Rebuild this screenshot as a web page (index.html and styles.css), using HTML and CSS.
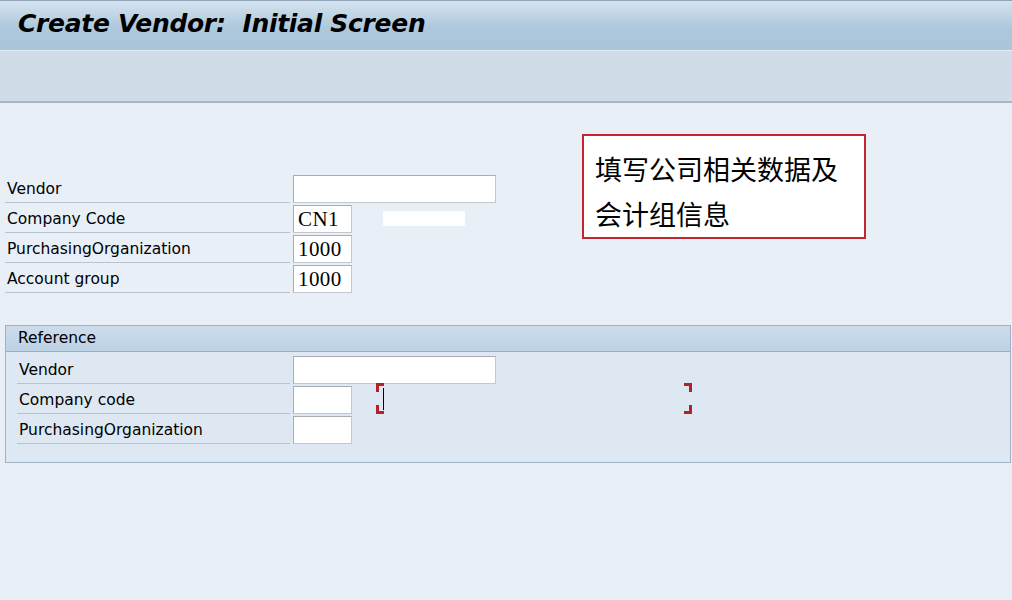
FILE: index.html
```html
<!DOCTYPE html>
<html>
  <head>
    <title>Create Vendor: Initial Screen</title>
    <link rel="stylesheet" href="styles.css">
  </head>
  <body>
    <div class="title-bar">
      <h1>Create Vendor:&nbsp; Initial Screen</h1>
    </div>
    <div class="toolbar"></div>

    <div class="screen">
      <div class="field-block">
        <div class="row">
          <label>Vendor</label>
          <div class="input wide"></div>
        </div>
        <div class="row">
          <label>Company Code</label>
          <div class="input short">CN1</div>
          <div class="desc"></div>
        </div>
        <div class="row">
          <label>PurchasingOrganization</label>
          <div class="input short">1000</div>
        </div>
        <div class="row">
          <label>Account group</label>
          <div class="input short">1000</div>
        </div>
      </div>

      <div class="group">
        <div class="group-title">Reference</div>
        <div class="group-body">
          <div class="row">
            <label>Vendor</label>
            <div class="input wide"></div>
          </div>
          <div class="row">
            <label>Company code</label>
            <div class="input short"></div>
            <div class="focus-frame">
              <span class="corner tl"></span>
              <span class="corner tr"></span>
              <span class="corner bl"></span>
              <span class="corner br"></span>
              <span class="caret"></span>
            </div>
          </div>
          <div class="row">
            <label>PurchasingOrganization</label>
            <div class="input short"></div>
          </div>
        </div>
      </div>

      <div class="callout">填写公司相关数据及<br>会计组信息</div>
    </div>
  </body>
</html>
```

FILE: styles.css
```css
html, body {
  margin: 0;
  padding: 0;
}

body {
  width: 1012px;
  height: 600px;
  overflow: hidden;
  background: #e9eff7;
  font-family: "DejaVu Sans", Tahoma, sans-serif;
  color: #000;
}

.title-bar {
  height: 50px;
  border-top: 1px solid #8fa4b8;
  border-bottom: 1px solid #b4c4d2;
  background: linear-gradient(#d6e3ef, #aec8dc 55%, #aac5da);
  box-sizing: border-box;
  padding-left: 18px;
}

.title-bar h1 {
  margin: 0;
  font-family: "DejaVu Sans", Tahoma, sans-serif;
  font-size: 25px;
  font-style: italic;
  font-weight: bold;
  line-height: 46px;
  letter-spacing: -0.3px;
}

.toolbar {
  height: 50px;
  border-top: 1px solid #e4ecf3;
  border-bottom: 2px solid #a9b8c6;
  background: #d0dde8;
}

.screen {
  position: relative;
  padding: 71px 0 0 5px;
}

.row {
  display: flex;
  align-items: flex-start;
  height: 30px;
}

.row label {
  width: 285px;
  height: 29px;
  box-sizing: border-box;
  padding-left: 2px;
  border-bottom: 1px solid #b9c3cd;
  font-size: 15.5px;
  line-height: 30px;
}

.input {
  margin: 1px 0 0 3px;
  height: 28px;
  box-sizing: border-box;
  background: #fff;
  border: 1px solid #c2c8ce;
  border-top-color: #a7adb3;
  border-left-color: #a7adb3;
  font-family: "Liberation Serif", "Times New Roman", serif;
  font-size: 21px;
  line-height: 26px;
  padding-left: 4px;
  letter-spacing: 0.4px;
}

.input.wide {
  width: 203px;
}

.input.short {
  width: 59px;
}

.desc {
  width: 82px;
  height: 15px;
  margin: 7px 0 0 31px;
  background: #fdfeff;
}

.group {
  margin-top: 31px;
  width: 1006px;
  border: 1px solid #9fb2c5;
  box-sizing: border-box;
  background: #dee8f3;
}

.group-title {
  height: 25px;
  border-bottom: 1px solid #98adc2;
  background: linear-gradient(#cddcec, #bdd2e5);
  padding-left: 12px;
  font-size: 15.5px;
  line-height: 24px;
}

.group-body {
  padding: 3px 0 17px 11px;
}

.group-body .row label {
  width: 273px;
}

.focus-frame {
  position: relative;
  width: 316px;
  height: 31px;
  margin: -2px 0 0 24px;
}

.corner {
  position: absolute;
  width: 5px;
  height: 6px;
  border: 0 solid #b3222a;
}

.corner.tl {
  left: 0;
  top: 0;
  border-top-width: 3px;
  border-left-width: 3px;
}

.corner.tr {
  right: 0;
  top: 0;
  border-top-width: 3px;
  border-right-width: 3px;
}

.corner.bl {
  left: 0;
  bottom: 0;
  border-bottom-width: 3px;
  border-left-width: 3px;
}

.corner.br {
  right: 0;
  bottom: 0;
  border-bottom-width: 3px;
  border-right-width: 3px;
}

.caret {
  position: absolute;
  left: 7px;
  top: 5px;
  width: 1px;
  height: 22px;
  background: #000;
}

.callout {
  position: absolute;
  left: 582px;
  top: 31px;
  width: 284px;
  height: 105px;
  box-sizing: border-box;
  border: 2px solid #c1272f;
  background: #fff;
  padding: 10px 0 0 11px;
  font-family: "Noto Sans CJK SC", sans-serif;
  font-size: 27px;
  line-height: 45px;
}
```
